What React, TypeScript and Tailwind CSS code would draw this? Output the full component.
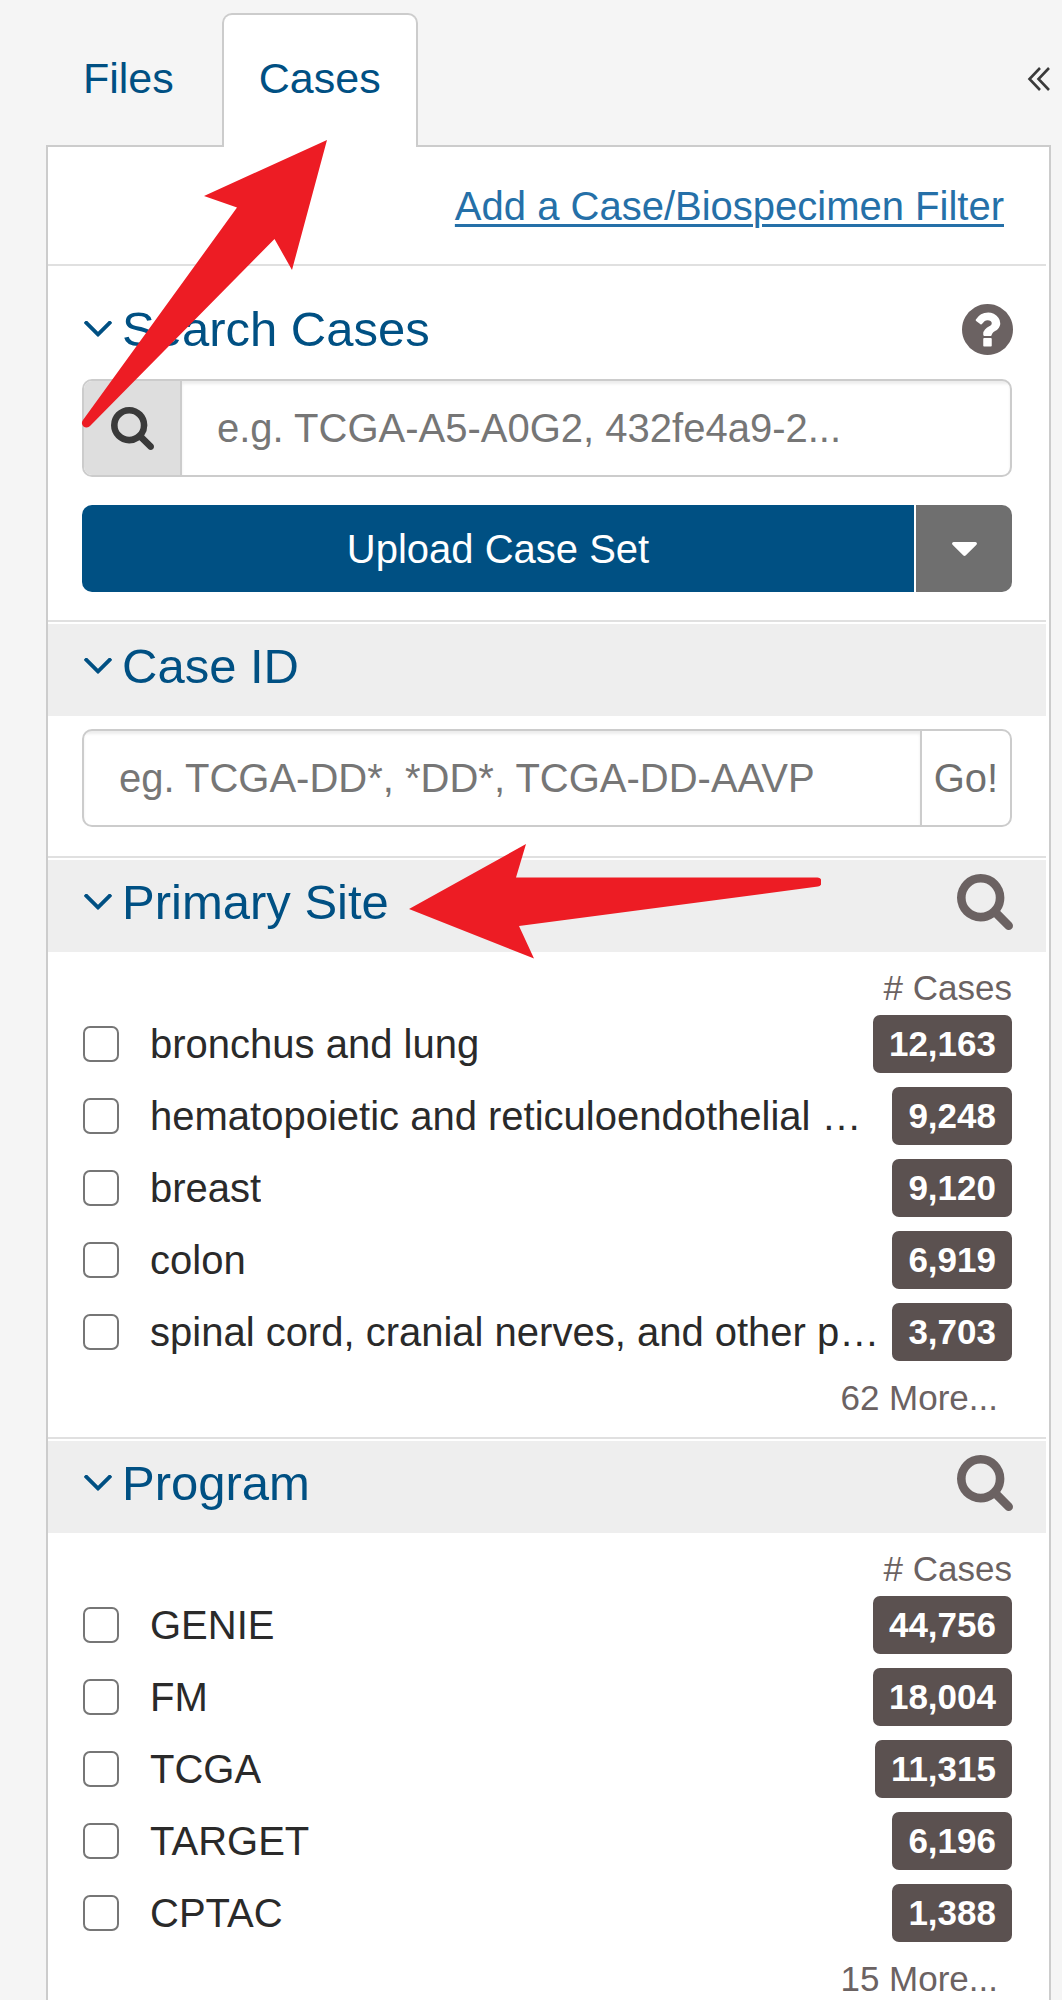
import type { ReactNode } from "react";

const SEARCH_PATH =
  "M1216 832q0-185-131.5-316.5t-316.5-131.5-316.5 131.5-131.5 316.5 131.5 316.5 316.5 131.5 316.5-131.5 131.5-316.5zm512 832q0 52-38 90t-90 38q-54 0-90-38l-343-342q-179 124-399 124-143 0-273.5-55.5t-225-150-150-225-55.5-273.5 55.5-273.5 150-225 225-150 273.5-55.5 273.5 55.5 225 150 150 225 55.5 273.5q0 220-124 399l343 343q37 37 37 90z";

function SearchIcon({ className }: { className: string }) {
  return (
    <svg viewBox="64 128 1664 1664" fill="currentColor" className={className} aria-hidden="true">
      <path d={SEARCH_PATH} />
    </svg>
  );
}

function HelpIcon() {
  return (
    <svg viewBox="128 128 1536 1536" fill="currentColor" className="size-[51px]" aria-hidden="true">
      <path d="M1024 1376v-192q0-14-9-23t-23-9h-192q-14 0-23 9t-9 23v192q0 14 9 23t23 9h192q14 0 23-9t9-23zm256-672q0-88-55.5-163t-138.5-116-170-41q-243 0-371 213-15 24 8 42l132 100q7 6 19 6 16 0 25-12 53-68 86-92 34-24 86-24 48 0 85.5 26t37.5 59q0 38-20 61t-68 45q-63 28-115.5 86.5t-52.5 125.5v36q0 14 9 23t23 9h192q14 0 23-9t9-23q0-19 21.5-49.5t54.5-49.5q32-18 49-28.5t46-35 44.5-48 28-60.5 12.5-81zm384 192q0 209-103 385.5t-279.5 279.5-385.5 103-385.5-103-279.5-279.5-103-385.5 103-385.5 279.5-279.5 385.5-103 385.5 103 279.5 279.5 103 385.5z" />
    </svg>
  );
}

function AngleDown() {
  return (
    <svg viewBox="397 680 998 555" fill="currentColor" className="h-4 w-7 shrink-0" aria-hidden="true">
      <path d="M1395 736q0 13-10 23l-466 466q-10 10-23 10t-23-10l-466-466q-10-10-10-23t10-23l50-50q10-10 23-10t23 10l393 393 393-393q10-10 23-10t23 10l50 50q10 10 10 23z" />
    </svg>
  );
}

function FacetTitle({ title, shaded, action, children }: { title: string; shaded?: boolean; action?: ReactNode; children?: ReactNode }) {
  return (
    <div
      className={
        shaded
          ? "relative flex h-[92px] items-center justify-between bg-[#eeeeee] pr-[33px] pb-2 pl-9"
          : "relative flex h-[92px] items-center justify-between pr-[33px] pb-2 pl-9"
      }
    >
      <h2 className="text-[49px] leading-none text-[#005083]">
        <button type="button" className="flex items-center gap-[10px]">
          <AngleDown />
          {title}
        </button>
      </h2>
      {action}
      {children}
    </div>
  );
}

type Bucket = { name: string; count: string; fullName?: string };

const primarySites: Bucket[] = [
  { name: "bronchus and lung", count: "12,163" },
  {
    name: "hematopoietic and reticuloendothelial …",
    fullName: "hematopoietic and reticuloendothelial systems",
    count: "9,248",
  },
  { name: "breast", count: "9,120" },
  { name: "colon", count: "6,919" },
  {
    name: "spinal cord, cranial nerves, and other p…",
    fullName: "spinal cord, cranial nerves, and other parts of central nervous system",
    count: "3,703",
  },
];

const programs: Bucket[] = [
  { name: "GENIE", count: "44,756" },
  { name: "FM", count: "18,004" },
  { name: "TCGA", count: "11,315" },
  { name: "TARGET", count: "6,196" },
  { name: "CPTAC", count: "1,388" },
];

function TermFacet({ title, buckets, more, children }: { title: string; buckets: Bucket[]; more: string; children?: ReactNode }) {
  return (
    <section className="mr-[3px] border-t-2 border-[#e0e0e0] pt-[2px] pb-[13px]">
      <FacetTitle
        title={title}
        shaded
        action={
          <button type="button" aria-label={`Search ${title}`} className="text-[#6b6262]">
            <SearchIcon className="size-14" />
          </button>
        }
      >
        {children}
      </FacetTitle>
      <div className="px-[34px]">
        <p className="pt-[15px] text-right text-[35px] leading-[41px] text-[#6b6262]"># Cases</p>
        <ul>
          {buckets.map((b) => (
            <li key={b.name} className="flex h-[72px] items-center justify-between gap-1">
              <label title={b.fullName} className="flex min-w-0 items-center gap-[31px] text-[40px] leading-[50px] text-[#2a2a2a]">
                <input
                  type="checkbox"
                  className="ml-px size-9 shrink-0 appearance-none rounded-[7px] border-2 border-[#767676] bg-white checked:bg-[#005083]"
                />
                <span className="truncate">{b.name}</span>
              </label>
              <span className="shrink-0 rounded-[7px] bg-[#5b5150] px-4 text-[35px] leading-[58px] font-bold text-white">
                {b.count}
              </span>
            </li>
          ))}
        </ul>
        <div className="flex justify-end pt-1 pr-[14px] text-[35px] leading-[52px] text-[#6b6262]">
          <button type="button">{more}</button>
        </div>
      </div>
    </section>
  );
}

export default function App() {
  return (
    <main className="min-h-screen bg-[#f5f5f5] pr-[11px] pl-[46px] font-['Liberation_Sans',Arial,sans-serif]">
      <div className="flex items-center justify-between pt-[13px]">
        <div role="tablist" className="z-10 -mb-[2px] flex text-[43px] leading-[126px] text-[#005083]">
          <button type="button" role="tab" aria-selected="false" className="mr-[11px] border-2 border-b-0 border-transparent px-[35px] pb-[6px]">
            Files
          </button>
          <button
            type="button"
            role="tab"
            aria-selected="true"
            className="rounded-t-[10px] border-2 border-b-0 border-[#cccccc] bg-white px-[35px] pb-[6px]"
          >
            Cases
          </button>
        </div>
        <button type="button" aria-label="Collapse panel" className="text-[#3a3a3a]">
          <svg viewBox="0 0 24 24" fill="none" stroke="currentColor" strokeWidth="2.6" className="size-6" aria-hidden="true">
            <path d="M13 1 2.500 12 13 23M22 1 11.500 12 22 23" />
          </svg>
        </button>
      </div>

      <div className="relative border-2 border-b-0 border-[#cccccc] bg-white">
        <div className="flex h-[117px] items-center justify-end pr-[45px]">
          <a href="#filter" className="text-[40px] leading-none text-[#2570a8] underline decoration-[3px] underline-offset-[4px]">
            Add a Case/Biospecimen Filter
          </a>
        </div>

        <section className="mr-[3px] border-t-2 border-[#e0e0e0] pt-[21px] pb-7">
          <FacetTitle
            title="Search Cases"
            action={
              <button type="button" aria-label="Help" className="text-[#6b6262]">
                <HelpIcon />
              </button>
            }
          />
          <div className="px-[34px]">
            <div className="flex h-[98px] overflow-hidden rounded-[10px] border-2 border-[#cccccc] bg-white">
              <label htmlFor="case-search" className="flex w-[98px] shrink-0 items-center justify-center border-r-2 border-[#cccccc] bg-[#dedede] text-[#3a3a3a]">
                <SearchIcon className="size-[43px]" />
              </label>
              <input
                id="case-search"
                aria-label="Search cases"
                placeholder="e.g. TCGA-A5-A0G2, 432fe4a9-2..."
                className="min-w-0 flex-1 px-[35px] text-[40px] text-[#555555] shadow-[inset_0_3px_3px_rgba(0,0,0,0.075)] outline-none placeholder:text-[#767676]"
              />
            </div>
            <div className="mt-7 flex h-[87px] gap-[2px] overflow-hidden rounded-[10px]">
              <button type="button" className="flex-1 bg-[#005083] text-[40px] text-white">
                Upload Case Set
              </button>
              <button type="button" aria-label="More upload options" className="flex w-24 items-center justify-center bg-[#6f6f6f] text-white">
                <svg viewBox="384 640 1024 576" fill="currentColor" className="h-[14px] w-[25px]" aria-hidden="true">
                  <path d="M1408 704q0 26-19 45l-448 448q-19 19-45 19t-45-19l-448-448q-19-19-19-45t19-45 45-19h896q26 0 45 19t19 45z" />
                </svg>
              </button>
            </div>
          </div>
        </section>

        <section className="mr-[3px] border-t-2 border-[#e0e0e0] pt-[2px] pb-[29px]">
          <FacetTitle title="Case ID" shaded />
          <div className="px-[34px] pt-[13px]">
            <div className="flex h-[98px] overflow-hidden rounded-[10px] border-2 border-[#cccccc] bg-white">
              <input
                aria-label="Case ID"
                placeholder="eg. TCGA-DD*, *DD*, TCGA-DD-AAVP"
                className="min-w-0 flex-1 px-[35px] text-[40px] text-[#555555] shadow-[inset_0_3px_3px_rgba(0,0,0,0.075)] outline-none placeholder:text-[#767676]"
              />
              <button type="button" className="w-[90px] border-l-2 border-[#cccccc] text-[40px] text-[#6f6f6f]">
                Go!
              </button>
            </div>
          </div>
        </section>

        <TermFacet title="Primary Site" buckets={primarySites} more="62 More...">
          <svg
            viewBox="409 844 412 115"
            fill="#ed1c24"
            className="pointer-events-none absolute top-[-16px] left-[361px] z-10 h-[115px] w-[412px]"
            aria-hidden="true"
          >
            <path d="M409 909 526 844 516 877.500H816.500A4.500 4.500 0 0 1 818 886.500L519 926 534 958.500Z" />
          </svg>
        </TermFacet>
        <TermFacet title="Program" buckets={programs} more="15 More..." />

        <svg
          viewBox="81 140 247 288"
          fill="#ed1c24"
          className="pointer-events-none absolute top-[-7px] left-[33px] z-20 h-[288px] w-[247px]"
          aria-hidden="true"
        >
          <path d="M327 140 204 196 237 207.500 83 420A4.500 4.500 0 0 0 90 426L274.500 239 292 270Z" />
        </svg>
      </div>
    </main>
  );
}
